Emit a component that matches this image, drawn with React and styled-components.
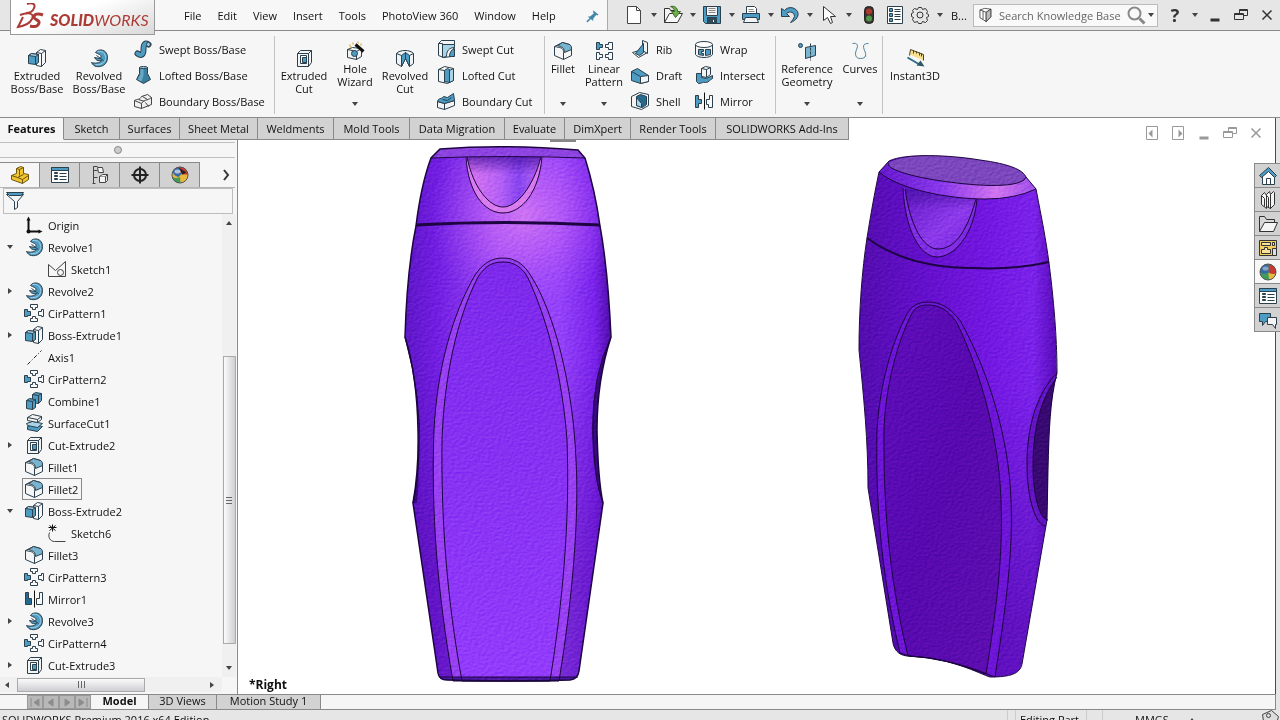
import React from "react";
import styled, { createGlobalStyle } from "styled-components";

const GlobalStyle = createGlobalStyle`
  * {
    box-sizing: border-box;
  }
  body {
    margin: 0;
    overflow: hidden;
    background: #e6e6e6;
  }
  body, button, input {
    font-family: "Open Sans", "Noto Sans", sans-serif;
    font-size: 11px;
    color: #111;
  }
  button {
    padding: 0;
    border: 0;
    background: none;
  }
  ul {
    list-style: none;
    margin: 0;
    padding: 0;
  }
  svg {
    display: block;
    flex: none;
  }
`;

const Window = styled.div`
  display: flex;
  flex-direction: column;
  height: 100vh;
  overflow: hidden;
`;

/* ---------- icons ---------- */

const INK = "#2b3f4c";
const BLUE = "#4d9cc3";
const PALE = "#a9d3e6";
const DEEP = "#256a8e";

const drawings = {
  extrude: (
    <g stroke={INK} strokeLinejoin="round">
      <path d="M8 3l4-3 5 1v12l-4 4-5-1z" fill="#f8f8f8" />
      <path d="M13 4l4-3M13 4v13M8 3l5 1" fill="none" />
      <path d="M0 6l3-2 7 1v8l-3 2-7-1z" fill={BLUE} />
      <path d="M0 6l7 1 3-2-7-1z" fill={PALE} />
      <path d="M7 7v8" />
    </g>
  ),
  revolve: (
    <g stroke={INK} strokeLinejoin="round">
      <path d="M5 3C7-1 17-1 17 8c0 7-6 10-11 9-2 0-4-2-5-4 3 1 8 1 10-2C7 12 5 10 4 8l5 1c2-1 2-3 0-4-1-1-3-1-4-2z" fill={BLUE} />
      <path d="M7 2c5-1 8 2 8 6M5 15c5 1 10-2 10-6" fill="none" stroke={PALE} />
      <path d="M6 6l7 5" />
    </g>
  ),
  sweep: (
    <g fill="none" strokeLinecap="round">
      <path d="M3 13c4 3 6 1 6-4 0-6 2-7 5-5" stroke={INK} strokeWidth="6" />
      <path d="M3 13c4 3 6 1 6-4 0-6 2-7 5-5" stroke={BLUE} strokeWidth="4" />
      <circle cx="14" cy="4" r="2" fill={PALE} stroke={INK} strokeWidth="1" />
    </g>
  ),
  loft: (
    <g stroke={INK} strokeLinejoin="round">
      <path d="M5 1v6L2 13l7 4 7-4-3-6V1z" fill="#3a7f9f" />
      <path d="M6 2v6l-3 5 4 2 2-6V3z" fill="#69a9c5" stroke="none" />
      <ellipse cx="9" cy="1" rx="4" ry="1" fill={PALE} />
    </g>
  ),
  boundary: (
    <g stroke="#444" strokeLinejoin="round" fill="#f1f1f1">
      <path d="M0 8c3-2 5 0 7-4l6-2 4 3v7l-10 4-7-2z" />
      <path d="M0 8l7 3c3-5 5-2 10-6M7 11v5M4 7l6 2M8 4l5 3M11 10l3 4" fill="none" />
    </g>
  ),
  extrudeCut: (
    <g stroke={INK} strokeLinejoin="round">
      <path d="M2 4l3-3h11v12l-3 4H2z" fill="#f4f4f4" />
      <path d="M2 4h11v13M13 4l3-3" fill="none" />
      <path d="M5 6h6v8H5z" fill="#fff" />
      <path d="M7 8h4v5H7z" fill={BLUE} />
    </g>
  ),
  hole: (
    <g stroke={INK} strokeLinejoin="round">
      <path d="M1 7l5-2 9 1v8l-5 3-9-2z" fill="#f4f4f4" />
      <path d="M1 7l9 2 5-3M10 9v8" fill="none" />
      <circle cx="8" cy="11" r="3" fill={BLUE} />
      <path d="M9 2l8 7" strokeWidth="3" stroke="#111" />
      <path d="M3 3h1M6 1h1M11 0h1M4 5h1M14 2h1" stroke="#d09a18" strokeWidth="2" />
    </g>
  ),
  revolveCut: (
    <g stroke={INK} strokeLinejoin="round">
      <path d="M0 4c3-4 14-4 17 0v10l-4 3-4-8-4 8-5-3z" fill="#eef3f5" />
      <path d="M5 6l4-3v6l-4 8zM13 6L9 3v6l4 8z" fill={BLUE} />
      <path d="M0 4l5 2M17 4l-4 2" fill="none" />
    </g>
  ),
  sweepCut: (
    <g stroke={INK} strokeLinejoin="round">
      <path d="M1 3l3-3h13v5l-3 11-8 1-5-2z" fill="#f4f4f4" />
      <path d="M5 4h12v3c-5 0-8 3-8 9l-4 1z" fill={PALE} />
      <path d="M17 8v8h-5c0-4 2-7 5-8z" fill={BLUE} />
      <path d="M1 3h4v13" fill="none" />
    </g>
  ),
  loftCut: (
    <g stroke={INK} strokeLinejoin="round">
      <path d="M1 3l6-3 9 2v12l-6 3-9-2z" fill="#f4f4f4" />
      <path d="M7 4l3-2 2 1v13l-5-1z" fill={BLUE} />
      <path d="M12 4l4-2v12l-4 2z" fill={PALE} />
      <path d="M1 3l6 1v12" fill="none" />
    </g>
  ),
  boundaryCut: (
    <g stroke={INK} strokeLinejoin="round">
      <path d="M0 9l7 2 10-3v5l-10 4-7-2z" fill="#f4f4f4" />
      <path d="M0 9c1-4 4-2 6-5l4 1 6-4 1 7-10 3z" fill={BLUE} />
      <path d="M7 11v6M5 7l5 1 4-3" fill="none" />
    </g>
  ),
  fillet: (
    <g stroke={INK} strokeLinejoin="round">
      <path d="M0 4l8-4 7 2 2 4v7l-8 4-9-4z" fill="#f6f6f6" />
      <path d="M8 0l7 2c2 1 2 3 2 5l-7 3c0-3-1-5-4-6l-3-1z" fill="#78b4cf" />
      <path d="M0 4l5 1c4 1 4 3 4 5v7" fill="none" />
    </g>
  ),
  linear: (
    <g stroke={INK} fill="#fafafa">
      <path d="M1 0h3v2h3v3H4v2H1z" fill={BLUE} />
      <path d="M17 0h-4v2h-3v3h3v2h4zM1 10h3v2h3v3H4v2H1zM17 10h-4v2h-3v3h3v2h4z" />
    </g>
  ),
  rib: (
    <g stroke={INK} strokeLinejoin="round">
      <path d="M1 12l10-3 5 3-9 5z" fill="#f4f4f4" />
      <path d="M11 0l5 2v11l-5-3z" fill="#f4f4f4" />
      <path d="M4 13L12 3v9l-4 3z" fill={BLUE} />
    </g>
  ),
  draft: (
    <g stroke={INK} strokeLinejoin="round">
      <path d="M0 5l6-3 11 7v6l-8 2-9-3z" fill={BLUE} />
      <path d="M0 5l9 5v7" fill="none" />
      <path d="M9 10l8-1v6l-8 2z" fill="#f4f4f4" />
    </g>
  ),
  shell: (
    <g stroke={INK} strokeLinejoin="round">
      <path d="M0 4l8-4 9 2v11l-7 4-10-3z" fill="#f4f4f4" />
      <path d="M5 4l4-2 6 2v8l-4 3-6-2z" fill={DEEP} />
      <path d="M5 5l5 6v4l-5-2z" fill={PALE} />
    </g>
  ),
  wrap: (
    <g stroke={INK} strokeLinejoin="round">
      <path d="M0 4v10c2 4 15 4 17 0V4z" fill="#f4f4f4" />
      <ellipse cx="8.5" cy="4" rx="8.5" ry="3" fill="#fff" />
      <path d="M3 9h5v2H6v2h2v2l-5-1zM10 9h5v5l-5 1z" fill={BLUE} />
    </g>
  ),
  intersect: (
    <g stroke={INK} strokeLinejoin="round">
      <path d="M1 7h5v4l5 1 6-3v3c-3 1-3 4-7 4-3-1-3 1-7 1l-2-2z" fill={BLUE} />
      <path d="M6 2l4-2 5 1v7l-4 3-5-1z" fill="#f4f4f4" />
      <path d="M6 2l5 1 4-2M11 3v8" fill="none" />
    </g>
  ),
  mirror: (
    <g stroke={INK} fill="#f8f8f8">
      <path d="M0 3h3v4h3v4H3v4H0z" fill={BLUE} />
      <path d="M17 3h-3v4h-3v5h2v3h4z" />
      <path d="M9 0v17" stroke="#111" />
    </g>
  ),
  mirrorTree: (
    <g stroke={INK} fill="#f8f8f8">
      <path d="M0 2h3v6h3v6H0z" fill={DEEP} />
      <path d="M17 2h-3v6h-3v6h6z" />
      <path d="M9 0v17" stroke="#111" />
    </g>
  ),
  reference: (
    <g stroke={INK} strokeLinejoin="round">
      <circle cx="2" cy="3" r="2" fill={BLUE} />
      <path d="M7 5l10-2v10L7 16z" fill="#7ab5d0" />
      <path d="M12 1v17" strokeDasharray="3 1" />
    </g>
  ),
  curves: (
    <path d="M1 1c5-1 6 2 4 6-2 5-1 9 4 9 6 0 6-4 4-8-2-5-1-7 4-7" fill="none" stroke="#47809a" />
  ),
  instant: (
    <g strokeLinejoin="round">
      <path d="M4 0l13 5v6L3 5z" fill="#f6e08f" />
      <path d="M3 6l1-6 13 5v6M7 1v3M10 2v2M13 3v3M15 4v3" fill="none" stroke="#4a4321" />
      <path d="M1 8l12 7" stroke="#2f6c83" strokeWidth="2" />
      <path d="M18 17l-8-1 4-5z" fill="#2f5666" />
    </g>
  ),
  cir: (
    <g stroke={INK} fill="#fafafa">
      <path d="M-1 5h3v2h3v4H2v1h-3z" fill={BLUE} />
      <path d="M18 5h-2v2h-3v4h3v1h2zM5 0h7v3h-2v2H7V3H5zM5 17h7v-3h-2v-2H7v2H5z" />
    </g>
  ),
  axis: <path d="M2 16L16 2" stroke="#222" strokeDasharray="4 2 1 2" />,
  origin: (
    <g fill="#111">
      <path d="M3 3v12h11" fill="none" stroke="#111" strokeWidth="2" />
      <path d="M1 4l2-4 2 4zM13 13l4 2-4 2z" />
      <circle cx="3" cy="15" r="2" />
    </g>
  ),
  sketch: (
    <g stroke="#444" fill="none">
      <path d="M0 16V4l7 6 10-9v15z" />
      <circle cx="12" cy="12" r="3" />
    </g>
  ),
  sketchOpen: (
    <g stroke="#444" fill="none">
      <path d="M1 8c-2 5 1 9 5 9h11" />
      <path d="M4 0v7M1 1l6 5M1 6l6-5M0 3h8" stroke="#111" />
    </g>
  ),
  combine: (
    <g stroke={INK} fill={BLUE} strokeLinejoin="round">
      <path d="M7 2l3-2 6 1v7l-3 3-6-1z" />
      <path d="M7 2l6 1 3-2M13 3v8" fill="none" />
      <path d="M1 8l3-2 6 1v8l-3 2-6-1z" />
      <path d="M1 8l6 1 3-2M7 9v8" fill="none" />
    </g>
  ),
  surface: (
    <g stroke={INK} strokeLinejoin="round">
      <path d="M2 12l6-2 9 2-5 5-10-2z" fill={BLUE} />
      <path d="M1 9l6-2 10 2-5 4-10-2z" fill={PALE} />
      <path d="M2 3l5-3 9 2v3l-4 3-10-2z" fill="#f4f4f4" />
      <path d="M2 3l10 2 4-3M12 5v3" fill="none" />
    </g>
  ),
  part: (
    <g stroke="#6d5410" strokeLinejoin="round">
      <path d="M5 2l4-2 3 1v6l5 1v5l-6 4-11-4V9l5-2z" fill="#f2c62f" />
      <path d="M0 9l6 2 6-3M5 2l3 1v6M8 3l4-2M11 17v-4l6-4M11 13l-5-2" fill="none" />
    </g>
  ),
  props: (
    <g stroke={INK}>
      <path d="M0 1h17v15H0z" fill="#fff" />
      <path d="M0 1h17v3H0z" fill={BLUE} />
      <path d="M3 6h3v1H3zM3 9h3v1H3zM3 12h3v1H3z" fill={BLUE} />
      <path d="M8 7h7M8 10h7M8 13h7" />
    </g>
  ),
  config: (
    <g stroke="#444" fill="#f4f4f4">
      <path d="M2 0v17M2 0h4M2 4h4M2 11h4M1 17h3" fill="none" />
      <path d="M6 1h5l1 5H7zM8 10h6v6H8z" />
      <path d="M8 10l3-2h5l-2 2M14 16l2-2V8" />
    </g>
  ),
  target: (
    <g stroke="#222" fill="none" strokeWidth="2">
      <circle cx="8.5" cy="8.5" r="6" />
      <path d="M8.5 0v17M0 8.5h17" />
    </g>
  ),
  ball: (
    <g>
      <circle cx="8.5" cy="8.5" r="8" fill="#3f9b58" />
      <path d="M9 9V.5a8 8 0 0 1 7.500 8.500c-1 2-5 2-7.500 0z" fill="#c83a31" />
      <path d="M9 9c3 2 6.500 2 7.500 0a8 8 0 0 1-6.500 7.500c-1-3-1-5-1-7.500z" fill="#e8b73c" />
      <path d="M9 9V.5a8 8 0 0 0-8.500 8c2 2 5.500 2.500 8.500.5z" fill="#356aa8" />
      <circle cx="8.5" cy="8.5" r="8" fill="none" stroke="#555" />
      <ellipse cx="6" cy="5" rx="3" ry="2" fill="#fff" opacity=".4" />
    </g>
  ),
  appearance: (
    <g>
      <circle cx="8.5" cy="8.5" r="8" fill="#e8b73c" />
      <path d="M1 5a8 8 0 0 1 6-4.500l3 7-3 3C4 10 2 8 1 5z" fill="#356aa8" />
      <path d="M7 .5c5-1 9 3 9.500 7.500L10 8z" fill="#c83a31" />
      <path d="M.5 10c3 2 5 2 8 .5l.5 6C5 17 1 14 .5 10z" fill="#3f9b58" />
      <path d="M7 1l8 5-4 2z" fill="#222" />
      <circle cx="8.5" cy="8.5" r="8" fill="none" stroke="#555" />
      <ellipse cx="6" cy="5" rx="3" ry="2" fill="#fff" opacity=".6" />
    </g>
  ),
  funnel: (
    <g stroke={INK} strokeLinejoin="round">
      <path d="M0 2h17l-6 7v6l-3 2V9z" fill="#f2f5f7" />
      <path d="M0 0h17l-2 3H3z" fill={BLUE} />
    </g>
  ),
  page: (
    <g stroke="#444" fill="#fdfdfd">
      <path d="M2 0h9l4 4v13H2z" />
      <path d="M11 0v4h4" fill="none" />
    </g>
  ),
  open: (
    <g stroke="#333" strokeLinejoin="round">
      <path d="M0 16V2h5l1 2h6v4" fill="#f4f4f4" />
      <path d="M0 16L5 7h13l-5 9z" fill="#f8f8f8" />
      <path d="M6 0c4-1 7 1 7 5h3l-5 6-4-6h3c0-3-2-4-4-5z" fill="#6fae4a" stroke="#3b6b29" />
    </g>
  ),
  save: (
    <g stroke={INK}>
      <path d="M0 0h17v17H2l-2-2z" fill={BLUE} />
      <path d="M3 0h11v9H3z" fill="#f4f4f4" />
      <path d="M5 2h7M5 4h7M5 6h7" stroke="#888" />
      <path d="M4 11h9v6H4z" fill="#2b4c5d" />
      <path d="M9 13h2v3H9z" fill="#fff" />
    </g>
  ),
  print: (
    <g stroke={INK}>
      <path d="M4 7V0h8l2 2v5z" fill="#fff" />
      <path d="M6 3h5M6 5h6" stroke="#888" />
      <path d="M0 7h17v6H0z" fill={BLUE} />
      <path d="M3 11h11l2 5H1z" fill="#f4f4f4" />
    </g>
  ),
  undo: <path d="M0 2v8h8L5 7c4-3 8-1 8 3-1 2-2 4-4 6 6-2 9-7 7-11C13 0 6 0 3 4z" fill={BLUE} stroke={INK} />,
  cursor: <path d="M3 0v14l4-3 3 6 2-1-2-6h5z" fill="#fff" stroke="#333" />,
  traffic: (
    <g>
      <rect x="4" y="0" width="9" height="17" rx="4" fill="#3a3230" stroke="#222" />
      <circle cx="8.5" cy="5" r="3" fill="#b03a2c" />
      <circle cx="8.5" cy="12" r="3" fill="#4c9a48" />
    </g>
  ),
  list: (
    <g stroke={INK} fill="#fff">
      <path d="M1 0h15v17H1z" />
      <path d="M3 2h3v3H3zM3 7h3v3H3zM3 12h3v3H3z" fill={BLUE} />
      <path d="M8 3h6M8 5h6M8 8h6M8 10h6M8 13h6" />
    </g>
  ),
  gear: (
    <g stroke="#333" fill="none">
      <circle cx="8.5" cy="8.5" r="3" />
      <path d="M7 1h3l1 2 3-1 2 3-1 2 2 1v2l-2 1 1 3-2 2-3-1-1 2H7l-1-2-3 1-2-3 1-2-2-1V7l2-1-1-2 2-2 3 1z" />
    </g>
  ),
  book: (
    <g stroke="#333" strokeLinejoin="round">
      <path d="M2 2l6-2 8 1v10l-6 6-3-2-5-3z" fill="#fff" />
      <path d="M6 3v11M10 5v12M2 2l8 3 6-4" fill="none" />
      <path d="M10 5l6-4v10l-6 6z" fill="#bbb" />
    </g>
  ),
  search: (
    <g fill="none" stroke="#888" strokeWidth="2">
      <circle cx="7" cy="7" r="6" />
      <path d="M12 12l5 5" strokeWidth="3" />
    </g>
  ),
  minimise: <path d="M4 12h9v3H4z" fill="currentColor" />,
  restore: (
    <g fill="none" stroke="currentColor">
      <path d="M2 7h9v6H2zM2 8h9M7 7V3h8v6h-4M7 4h8" />
    </g>
  ),
  close: <path d="M4 4l9 9M13 4l-9 9" stroke="currentColor" strokeWidth="1.500" />,
  paneLeft: (
    <g>
      <path d="M3 2h11v13H3z" fill="none" stroke="currentColor" />
      <path d="M9 5v8L5 9z" fill="currentColor" />
    </g>
  ),
  paneRight: (
    <g>
      <path d="M3 2h11v13H3z" fill="none" stroke="currentColor" />
      <path d="M9 5v8l4-4z" fill="currentColor" />
    </g>
  ),
  pin: (
    <g fill="#3f87a6">
      <path d="M10 1l7 6-2 1-1-1-4 5v3L3 9h3l5-4-1-1z" />
      <path d="M7 11l-5 5" stroke="#3f87a6" strokeWidth="2" />
    </g>
  ),
  home: (
    <g stroke={INK} strokeLinejoin="round">
      <path d="M3 8v9h12V8L9 3z" fill="#fff" />
      <path d="M7 17v-6h4v6" fill="none" />
      <path d="M0 8l9-8 8 8-2 2-6-6-7 6z" fill={BLUE} />
    </g>
  ),
  library: (
    <g stroke="#333" fill="#f4f4f4" strokeLinejoin="round">
      <path d="M11 3l3-3 1 1v12l-4 4zM7 3l3-3 1 3v14l-4-2zM2 4l3-3 2 3v13l-5-4z" />
      <path d="M2 4l3 3v8M7 4l2 2v10" fill="none" />
    </g>
  ),
  folder: (
    <g stroke="#333" strokeLinejoin="round">
      <path d="M0 16V1h5l2 3h8v3" fill="#d8d8d8" />
      <path d="M0 16L5 7h13l-4 9z" fill="#f4f4f4" />
    </g>
  ),
  palette: (
    <g stroke="#333" fill="#f3ce62">
      <path d="M0 1h17v15H0z" />
      <path d="M2 3h9v3H2zM13 3h2v3h-2zM2 14v-4h3V8h3v2h3v4z" fill="#f8e39a" />
      <path d="M13 9h4v7h-4z" fill="#ddd" />
    </g>
  ),
  forum: (
    <g stroke={INK} strokeLinejoin="round">
      <path d="M0 2h11v8H6l-3 4v-4H0z" fill={BLUE} />
      <path d="M8 6h9v7h-1v4l-3-4H8z" fill="#f4f4f4" />
    </g>
  ),
  note: (
    <g stroke="#444" fill="#ddd">
      <path d="M1 4l9-4 7 6-3 11H3z" />
      <circle cx="7" cy="5" r="2" />
    </g>
  ),
};

// strokes sit on whole coordinates, so the box is shifted by half a unit
const Icon = ({ name, size = 18 }) => (
  <svg width={size} height={size} viewBox="-0.5 -0.5 18 18" overflow="visible" aria-hidden="true">
    {drawings[name]}
  </svg>
);

const Caret = styled.span`
  width: 0;
  height: 0;
  border: 3px solid transparent;
  border-top: 4px solid #444;
  border-bottom: 0;
`;

/* ---------- title bar ---------- */

const TitleBar = styled.header`
  position: relative;
  display: flex;
  flex: 0 0 31px;
  padding-left: 155px;
  background: #e6e6e6;
  border-bottom: 1px solid #8a8a8a;
`;

const Brand = styled.div`
  position: absolute;
  z-index: 2;
  top: 0;
  left: 10px;
  display: flex;
  align-items: center;
  gap: 6px;
  width: 145px;
  height: 35px;
  padding-left: 5px;
  background: linear-gradient(160deg, #fff 40%, #d9d9d9);
  border: 1px solid #999;
  border-top: 0;
  color: #ad3b35;
`;

const BrandName = styled.div`
  padding-top: 6px;
  font-family: Lato, "Open Sans", sans-serif;
  font-size: 16px;
  line-height: 20px;
  font-style: italic;
  font-weight: 400;

  b {
    font-weight: 900;
  }
`;

const MenuBar = styled.nav`
  display: flex;
  flex: 0 0 453px;
  align-items: center;
  gap: 16px;
  padding: 2px 3px 0 29px;
  background: #f7f7f7;
  border-right: 1px solid #aaa;
`;

const MenuItem = styled.button`
  line-height: 20px;
  white-space: nowrap;
`;

const Toolbar = styled.div`
  display: flex;
  flex: 1;
  align-items: center;
  min-width: 0;
  padding-left: 14px;
`;

const ToolButton = styled.button`
  display: flex;
  flex: none;
  justify-content: center;
  align-items: center;
  width: ${(p) => p.$w || 24}px;
  height: 24px;
  color: ${(p) => p.$color || "#333"};
`;

const PinButton = styled(ToolButton)`
  margin-left: auto;
`;

const ToolCaret = styled(ToolButton)`
  width: 15px;
`;

const DocName = styled.span`
  flex: none;
  width: 26px;
  padding-left: 4px;
`;

const SearchBox = styled.label`
  display: flex;
  flex: 1;
  align-items: center;
  gap: 3px;
  min-width: 0;
  height: 23px;
  padding: 0 3px 0 4px;
  background: #f9f9f9;
  border: 1px solid #bbb;

  input {
    flex: 1;
    width: 0;
    min-width: 0;
    padding: 0 0 0 4px;
    border: 0;
    outline: 0;
    background: none;
  }
  input::placeholder {
    color: #666;
    opacity: 1;
  }
`;

const HelpMark = styled(ToolButton)`
  margin-left: 5px;
  font-size: 18px;
  font-weight: 700;
`;

/* ---------- ribbon ---------- */

const RibbonBar = styled.section`
  display: flex;
  flex: 0 0 87px;
  padding: 5px 0 3px 6px;
  background: #f6f6f6;
  border-bottom: 1px solid #8a8a8a;
`;

const Group = styled.div`
  display: flex;
  border-right: 1px solid #c4c4c4;

  &:last-child {
    border-right: 0;
  }
`;

const BigButton = styled.button`
  position: relative;
  display: flex;
  flex-direction: column;
  align-items: center;
  gap: 2px;
  width: ${(p) => p.$w}px;
  padding-top: ${(p) => (p.$menu ? 6 : 13)}px;
  line-height: 13px;
  white-space: pre-line;

  ${Caret} {
    position: absolute;
    bottom: 8px;
  }
`;

const SmallColumn = styled.div`
  width: ${(p) => p.$w}px;
  padding-left: 4px;
`;

const SmallButton = styled.button`
  display: flex;
  align-items: center;
  gap: 7px;
  height: 26px;
  white-space: nowrap;
`;

const ribbon = [
  [
    { w: 62, icon: "extrude", text: "Extruded\nBoss/Base" },
    { w: 62, icon: "revolve", text: "Revolved\nBoss/Base" },
    {
      w: 144,
      items: [
        ["sweep", "Swept Boss/Base"],
        ["loft", "Lofted Boss/Base"],
        ["boundary", "Boundary Boss/Base"],
      ],
    },
  ],
  [
    { w: 58, icon: "extrudeCut", text: "Extruded\nCut" },
    { w: 44, icon: "hole", text: "Hole\nWizard", menu: true },
    { w: 56, icon: "revolveCut", text: "Revolved\nCut" },
    {
      w: 111,
      items: [
        ["sweepCut", "Swept Cut"],
        ["loftCut", "Lofted Cut"],
        ["boundaryCut", "Boundary Cut"],
      ],
    },
  ],
  [
    { w: 36, icon: "fillet", text: "Fillet", menu: true },
    { w: 46, icon: "linear", text: "Linear\nPattern", menu: true },
    {
      w: 64,
      items: [
        ["rib", "Rib"],
        ["draft", "Draft"],
        ["shell", "Shell"],
      ],
    },
    {
      w: 84,
      items: [
        ["wrap", "Wrap"],
        ["intersect", "Intersect"],
        ["mirror", "Mirror"],
      ],
    },
  ],
  [
    { w: 62, icon: "reference", text: "Reference\nGeometry", menu: true },
    { w: 44, icon: "curves", text: "Curves", menu: true },
  ],
  [{ w: 64, icon: "instant", text: "Instant3D" }],
];

const Ribbon = () => (
  <RibbonBar>
    {ribbon.map((group, i) => (
      <Group key={i}>
        {group.map((part) =>
          part.items ? (
            <SmallColumn key={part.items[0][0]} $w={part.w}>
              {part.items.map(([icon, text]) => (
                <SmallButton key={text}>
                  <Icon name={icon} />
                  {text}
                </SmallButton>
              ))}
            </SmallColumn>
          ) : (
            <BigButton key={part.text} $w={part.w} $menu={part.menu}>
              <Icon name={part.icon} />
              {part.text}
              {part.menu && <Caret />}
            </BigButton>
          )
        )}
      </Group>
    ))}
  </RibbonBar>
);

/* ---------- command tabs ---------- */

const TabRow = styled.div`
  display: flex;
  flex: 0 0 22px;
  margin-right: 4px;
  background: #fff;
  border-right: 1px solid #2d5567;
`;

const Tab = styled.button`
  width: ${(p) => p.$w}px;
  background: ${(p) => (p.$active ? "#f6f6f6" : "#d2d2d2")};
  border-right: 1px solid #8a8a8a;
  border-bottom: 1px solid ${(p) => (p.$active ? "#f6f6f6" : "#8a8a8a")};
  font-weight: ${(p) => (p.$active ? 700 : 400)};
  line-height: 20px;
  white-space: nowrap;
`;

const DocControls = styled.div`
  display: flex;
  align-items: flex-end;
  margin: 0 6px 0 auto;

  ${ToolButton} {
    height: 14px;
  }
`;

const tabs = [
  ["Features", 64],
  ["Sketch", 56],
  ["Surfaces", 60],
  ["Sheet Metal", 78],
  ["Weldments", 76],
  ["Mold Tools", 76],
  ["Data Migration", 95],
  ["Evaluate", 60],
  ["DimXpert", 66],
  ["Render Tools", 85],
  ["SOLIDWORKS Add-Ins", 133],
];

/* ---------- feature tree ---------- */

const Body = styled.main`
  position: relative;
  display: flex;
  flex: 1;
  min-height: 0;
`;

const Panel = styled.aside`
  position: relative;
  display: flex;
  flex-direction: column;
  flex: 0 0 238px;
  background: #f6f6f6;
  border-right: 1px solid #8a8a8a;
`;

const Splitter = styled.div`
  display: flex;
  flex: 0 0 16px;
  align-items: center;
  justify-content: center;
  margin: 2px 2px 4px 0;
  border: 1px solid #c0c0c0;
  border-width: 1px 0;

  &::after {
    content: "";
    width: 6px;
    height: 6px;
    border: 1px solid #888;
    border-radius: 50%;
    background: #ccc;
  }
`;

const PanelTabs = styled.div`
  display: flex;
  flex: 0 0 26px;
  margin-right: 2px;
  border-bottom: 1px solid #b5b5b5;
`;

const PanelTab = styled.button`
  display: flex;
  align-items: center;
  justify-content: center;
  width: 40px;
  background: ${(p) => (p.$active ? "#f6f6f6" : "#d2d2d2")};
  border-top: 1px solid #8a8a8a;
  border-right: 1px solid #8a8a8a;
`;

const MoreButton = styled.button`
  display: flex;
  align-items: center;
  justify-content: center;
  width: 18px;
  margin-left: auto;
`;

const Filter = styled.label`
  display: flex;
  flex: 0 0 26px;
  align-items: center;
  margin: 0 4px 0 3px;
  padding-left: 2px;
  border: 1px solid #bdbdbd;

  input {
    flex: 1;
    min-width: 0;
    border: 0;
    outline: 0;
    background: none;
  }
`;

const TreeArea = styled.div`
  display: flex;
  flex: 1;
  min-height: 0;
`;

const Tree = styled.ul`
  flex: 1;
  overflow: hidden;
`;

const TreeRow = styled.li`
  display: flex;
  align-items: center;
  height: 22px;
  padding-left: ${(p) => (p.$deep ? 25 : 2)}px;
`;

const Expander = styled.button`
  display: flex;
  align-items: center;
  justify-content: center;
  width: 16px;
  height: 16px;
  margin-right: 4px;
  visibility: ${(p) => (p.$state ? "visible" : "hidden")};

  ${Caret} {
    transform: ${(p) => (p.$state === "closed" ? "rotate(-90deg)" : "none")};
  }
`;

const TreeLabel = styled.button`
  display: flex;
  align-items: center;
  gap: 5px;
  height: 22px;
  padding: 0 3px 0 2px;
  border: 1px solid ${(p) => (p.$boxed ? "#8a8a8a" : "transparent")};
`;

const ScrollY = styled.div`
  display: flex;
  flex-direction: column;
  align-items: center;
  width: 14px;
  margin-right: 1px;
  padding: 7px 0;
  background: #f0f0f0;

  ${Caret}:first-child {
    transform: rotate(180deg);
  }
`;

const ThumbY = styled.div`
  display: flex;
  align-items: center;
  justify-content: center;
  width: 13px;
  flex: 0 1 288px;
  margin: auto 0 22px;
  border: 1px solid #aaa;
  background: linear-gradient(90deg, #fafafa, #cfcfd3);

  &::after {
    content: "";
    width: 6px;
    height: 7px;
    background: repeating-linear-gradient(#666 0 1px, transparent 1px 3px);
  }
`;

const ScrollX = styled.div`
  display: flex;
  flex: 0 0 15px;
  align-items: center;
  margin: 0 15px 2px 0;
  padding: 0 7px 0 4px;
  background: #f0f0f0;

  ${Caret}:first-child {
    transform: rotate(90deg);
  }
  ${Caret}:last-child {
    margin-left: auto;
    transform: rotate(-90deg);
  }
`;

const ThumbX = styled.div`
  display: flex;
  align-items: center;
  justify-content: center;
  width: 128px;
  height: 14px;
  margin-left: 7px;
  border: 1px solid #aaa;
  background: linear-gradient(#fafafa, #cfcfd3);

  &::after {
    content: "";
    width: 7px;
    height: 7px;
    background: repeating-linear-gradient(90deg, #666 0 1px, transparent 1px 3px);
  }
`;

const features = [
  ["origin", "Origin"],
  ["revolve", "Revolve1", "open"],
  ["sketch", "Sketch1", null, true],
  ["revolve", "Revolve2", "closed"],
  ["cir", "CirPattern1"],
  ["extrude", "Boss-Extrude1", "closed"],
  ["axis", "Axis1"],
  ["cir", "CirPattern2"],
  ["combine", "Combine1"],
  ["surface", "SurfaceCut1"],
  ["extrudeCut", "Cut-Extrude2", "closed"],
  ["fillet", "Fillet1"],
  ["fillet", "Fillet2"],
  ["extrude", "Boss-Extrude2", "open"],
  ["sketchOpen", "Sketch6", null, true],
  ["fillet", "Fillet3"],
  ["cir", "CirPattern3"],
  ["mirrorTree", "Mirror1"],
  ["revolve", "Revolve3", "closed"],
  ["cir", "CirPattern4"],
  ["extrudeCut", "Cut-Extrude3", "closed"],
];

const FeaturePanel = () => (
  <Panel>
    <Splitter />
    <PanelTabs>
      {["part", "props", "config", "target", "appearance"].map((name, i) => (
        <PanelTab key={name} $active={i === 0} aria-label={name}>
          <Icon name={name} />
        </PanelTab>
      ))}
      <MoreButton aria-label="More tabs">
        <svg width="8" height="12" viewBox="0 0 8 12">
          <path d="M2 1l4 5-4 5" fill="none" stroke="#333" strokeWidth="2" />
        </svg>
      </MoreButton>
    </PanelTabs>
    <Filter>
      <Icon name="funnel" />
      <input type="text" aria-label="Filter" />
    </Filter>
    <TreeArea>
      <Tree>
        {features.map(([icon, text, state, deep]) => (
          <TreeRow key={text} $deep={deep}>
            <Expander $state={state} aria-label={`Toggle ${text}`}>
              <Caret />
            </Expander>
            <TreeLabel $boxed={text === "Fillet2"}>
              <Icon name={icon} />
              {text}
            </TreeLabel>
          </TreeRow>
        ))}
      </Tree>
      <ScrollY>
        <Caret />
        <ThumbY />
        <Caret />
      </ScrollY>
    </TreeArea>
    <ScrollX>
      <Caret />
      <ThumbX />
      <Caret />
    </ScrollX>
  </Panel>
);

/* ---------- viewport ---------- */

const Viewport = styled.section`
  position: relative;
  flex: 1;
  min-width: 0;
  margin-right: 4px;
  background: #fff;
  border-right: 1px solid #2d5567;
  overflow: hidden;
`;

const ViewName = styled.strong`
  position: absolute;
  left: 11px;
  bottom: 1px;
  font-size: 12px;
  line-height: 16px;
`;

const HeadsUpTab = styled.div`
  position: absolute;
  top: 0;
  left: 312px;
  width: 26px;
  height: 2px;
  background: #888;
`;

const TaskPane = styled.nav`
  position: absolute;
  z-index: 2;
  top: 23px;
  right: 0;
  width: 26px;
  border: 1px solid #8a8a8a;
  border-right: 0;
`;

const TaskButton = styled.button`
  display: flex;
  align-items: center;
  justify-content: center;
  width: 25px;
  height: 24px;
  background: ${(p) => (p.$active ? "#f8f8f8" : "#d2d2d2")};
  border-bottom: 1px solid #8a8a8a;

  &:last-child {
    height: 23px;
    border-bottom: 0;
  }
`;

const FRONT =
  "M440 149Q503 144 578 150L585 158Q595 190 600 226Q608 270 611 337Q597 380 597 430Q598 480 603 503L579 671Q578 679 570 680Q508 682 447 680Q439 680 438 673L413 503Q419 470 418 430Q417 375 405 337Q407 270 416 226Q421 185 431 158Z";
const FRONT_RIM =
  "M503 258C490 258 482 265 475 275C452 315 437 370 434 430C431 510 437 590 453 681L559 681C574 590 579 510 576 460C573 385 554 312 531 276C524 264 515 258 503 258Z";
const FRONT_PANEL =
  "M503 262C490 262 484 268 478 277C456 320 444 380 442 440C441 520 447 600 462 681L550 681C563 600 570 520 567 440C563 385 550 325 528 278C522 267 514 262 503 262Z";
const SIDE =
  "M879 172L889 161C905 153 950 155 980 160C1010 164 1023 170 1026 177L1036 189C1042 220 1046 240 1049 263C1055 310 1057 345 1057 373C1050 400 1049 430 1048 470L1047 520L1022 664C1020 674 1010 677 990 677C980 674 950 657 907 656C897 655 894 648 893 643L868 488C868 440 864 400 859 350C859 310 862 270 867 238Q873 200 879 172Z";
const SIDE_RIM =
  "M928 302C917 302 911 307 907 314C888 350 879 395 877 430C875 520 885 590 900 653L910 656Q950 658 995 677C1007 600 1013 550 1011 500C1009 440 990 375 961 322C951 308 941 302 928 302Z";
const SIDE_PANEL =
  "M928 305C918 305 914 309 911 315C894 350 885 395 884 430C883 520 892 590 908 656Q946 658 986 674C998 600 1003 550 1001 500C999 440 982 375 957 323C949 311 940 305 928 305Z";

const Bottles = () => (
  <svg width="100%" height="100%" viewBox="238 140 1037 554" preserveAspectRatio="xMinYMin meet" role="img" aria-label="Bottle model, two views">
    <defs>
      <linearGradient id="front" gradientUnits="userSpaceOnUse" x1="405" y1="0" x2="611" y2="0">
        <stop offset="0" stopColor="#5a14c4" />
        <stop offset=".15" stopColor="#6e1ae0" />
        <stop offset=".45" stopColor="#9844f6" />
        <stop offset=".75" stopColor="#923ef9" />
        <stop offset=".92" stopColor="#761fea" />
        <stop offset="1" stopColor="#4c0aa6" />
      </linearGradient>
      <linearGradient id="frontFoot" x1="0" y1="0" x2="0" y2="1">
        <stop offset=".4" stopColor="#4a06a0" stopOpacity="0" />
        <stop offset=".8" stopColor="#4a06a0" stopOpacity=".4" />
      </linearGradient>
      <radialGradient id="shine" gradientUnits="userSpaceOnUse" cx="524" cy="215" r="95">
        <stop offset="0" stopColor="#e484f2" stopOpacity=".7" />
        <stop offset=".5" stopColor="#c866f4" stopOpacity=".42" />
        <stop offset="1" stopColor="#a050f5" stopOpacity="0" />
      </radialGradient>
      <linearGradient id="frontPanel" x1="0" y1="0" x2="0" y2="1">
        <stop offset="0" stopColor="#7a25ea" />
        <stop offset=".5" stopColor="#842df2" />
        <stop offset="1" stopColor="#9038fb" />
      </linearGradient>
      <linearGradient id="lip" x1="0" y1="0" x2="1" y2="0">
        <stop offset="0" stopColor="#d873ee" />
        <stop offset=".45" stopColor="#b25cf5" />
        <stop offset=".7" stopColor="#8440ee" />
        <stop offset="1" stopColor="#b760f2" />
      </linearGradient>
      <linearGradient id="lipShade" x1="0" y1="0" x2="0" y2="1">
        <stop offset="0" stopColor="#4410a0" stopOpacity=".75" />
        <stop offset=".35" stopColor="#4410a0" stopOpacity="0" />
      </linearGradient>
      <linearGradient id="side" gradientUnits="userSpaceOnUse" x1="860" y1="0" x2="1057" y2="0">
        <stop offset="0" stopColor="#4f0bab" />
        <stop offset=".3" stopColor="#5f0dc8" />
        <stop offset=".65" stopColor="#6f14e0" />
        <stop offset=".88" stopColor="#771fe9" />
        <stop offset="1" stopColor="#5209b4" />
      </linearGradient>
      <linearGradient id="sideFoot" x1="0" y1="0" x2="0" y2="1">
        <stop offset=".45" stopColor="#4a06a0" stopOpacity="0" />
        <stop offset=".9" stopColor="#4a06a0" stopOpacity=".55" />
      </linearGradient>
      <linearGradient id="sideLip" x1="0" y1="0" x2="1" y2="1">
        <stop offset="0" stopColor="#5c14c0" />
        <stop offset=".6" stopColor="#8a36ea" />
        <stop offset="1" stopColor="#7020dc" />
      </linearGradient>
      <linearGradient id="sidePanel" x1="0" y1="0" x2="1" y2="1">
        <stop offset="0" stopColor="#5a0bb8" />
        <stop offset=".5" stopColor="#5308ac" />
        <stop offset="1" stopColor="#5a0cae" />
      </linearGradient>
      <linearGradient id="collar" x1="0" y1="0" x2="1" y2="0">
        <stop offset="0" stopColor="#6115cc" />
        <stop offset=".4" stopColor="#8634ea" />
        <stop offset=".75" stopColor="#d070f0" />
        <stop offset="1" stopColor="#9a48e8" />
      </linearGradient>
      <filter id="leather" x="0" y="0" width="100%" height="100%" colorInterpolationFilters="sRGB">
        <feTurbulence type="fractalNoise" baseFrequency=".3 .45" numOctaves="2" seed="4" result="noise" />
        <feDiffuseLighting in="noise" surfaceScale="1" lightingColor="#fff" result="lit">
          <feDistantLight azimuth="235" elevation="36" />
        </feDiffuseLighting>
        <feComposite in="lit" in2="SourceGraphic" operator="in" />
      </filter>
      <clipPath id="frontClip">
        <path d={FRONT} />
      </clipPath>
      <clipPath id="sideClip">
        <path d={SIDE} />
      </clipPath>
    </defs>

    <g clipPath="url(#frontClip)">
      <path d={FRONT} fill="url(#front)" />
      <path d={FRONT} fill="url(#frontFoot)" />
      <path d={FRONT} fill="url(#shine)" />
      <path d="M431 158L440 149Q503 144 578 150L585 158Q505 154 431 158Z" fill="#8a3fe0" />
      <path d="M405 337Q417 375 418 430Q419 470 413 503L417 503Q424 430 405 337Z" fill="#32077a" />
      <path d="M611 337Q592 380 592 430Q593 480 603 503L597 430Z" fill="#35077e" />
      <path d={FRONT_RIM} fill="#963cf2" />
      <path d={FRONT_PANEL} fill="url(#frontPanel)" />
      <path d="M438 677h140v5H438z" fill="#4a14a0" />
      <path d="M466 157C468 192 484 213 503 213S539 192 542 157Z" fill="#d878ee" />
      <path d="M467 157C473 187 489 207 503 207S533 187 541 157Z" fill="url(#lip)" />
      <path d="M467 157C473 187 489 207 503 207S533 187 541 157Z" fill="url(#lipShade)" />
    </g>

    <g clipPath="url(#sideClip)">
      <path d={SIDE} fill="url(#side)" />
      <path d={SIDE} fill="url(#sideFoot)" />
      <path d="M879 172C900 190 950 199 985 199Q1015 199 1036 189L1026 177L889 161Z" fill="url(#collar)" />
      <path d="M889 163C905 153 950 155 980 160C1010 164 1030 172 1024 180C1010 190 960 184 935 180C905 175 885 168 889 163Z" fill="#7843bb" />
      <path d={SIDE_RIM} fill="#6a12d6" />
      <path d={SIDE_PANEL} fill="url(#sidePanel)" />
      <path d="M1057 373C1035 395 1027 430 1027 463C1027 500 1036 526 1046 526Z" fill="#6011c4" />
      <path d="M1057 377C1040 400 1033 430 1033 465C1033 500 1041 520 1048 520Z" fill="#34086e" />
      <path d="M903 188C905 230 920 257 937 257S974 235 977 199Q940 198 903 188Z" fill="#7d28e4" />
      <path d="M905 188C910 225 923 249 938 249S966 235 976 199Q940 198 905 188Z" fill="url(#sideLip)" />
      <path d="M905 188C910 225 923 249 938 249S966 235 976 199Q940 198 905 188Z" fill="url(#lipShade)" />
    </g>

    <g filter="url(#leather)" opacity=".4" style={{ mixBlendMode: "soft-light" }}>
      <path d={FRONT} />
      <path d={SIDE} />
    </g>

    <g fill="none" stroke="#1c0540">
      <path d={FRONT} strokeWidth="1.5" />
      <path d={FRONT_RIM} />
      <path d={FRONT_PANEL} />
      <path d="M431 158Q505 155 585 158M439 677H578" />
      <path d="M416 225Q503 220 600 225" strokeWidth="3" />
      <path d="M466 157C468 192 484 213 503 213S539 192 542 157M467 157C473 187 489 207 503 207S533 187 541 157" />
      <path d="M405 337Q422 400 419 450Q418 480 413 503M611 337Q592 375 593 430Q594 480 603 503" />

      <path d={SIDE} />
      <path d={SIDE_RIM} />
      <path d={SIDE_PANEL} />
      <path d="M879 172C900 190 950 199 985 199Q1015 199 1036 189" />
      <path d="M889 163C885 168 905 175 935 180C960 184 1010 190 1024 180L1026 177" />
      <path d="M867 238C900 262 940 268 973 268Q1015 270 1049 262" strokeWidth="2" />
      <path d="M903 188C905 230 920 257 937 257S974 235 977 199M905 189C910 225 923 249 938 249S966 235 976 199" />
      <path d="M1057 373C1035 395 1027 430 1027 463C1027 500 1036 526 1046 526M1057 377C1040 400 1033 430 1033 465C1033 500 1041 520 1048 520" />
    </g>
  </svg>
);

/* ---------- bottom ---------- */

const BottomRow = styled.div`
  display: flex;
  flex: 0 0 16px;
  margin-right: 4px;
  padding-left: 27px;
  background: #f6f6f6;
  border: 1px solid #8a8a8a;
  border-width: 1px 1px 1px 0;
`;

const StepButton = styled.button`
  display: flex;
  align-items: center;
  justify-content: center;
  width: 16px;
  background: #b8b8b8;
  border: 1px solid #999;
`;

const steps = {
  First: "M1 0v9M9 1v7L4 4.500z",
  Previous: "M7 1v7L2 4.500z",
  Next: "M3 1v7l5-3.500z",
  Last: "M9 0v9M1 1v7l5-3.500z",
};

const ModelTab = styled.button`
  width: ${(p) => p.$w}px;
  padding-bottom: 2px;
  background: ${(p) => (p.$active ? "#f6f6f6" : "#d2d2d2")};
  border-right: 1px solid #8a8a8a;
  font-weight: ${(p) => (p.$active ? 700 : 400)};
  line-height: 12px;
`;

const StatusBar = styled.footer`
  display: flex;
  flex: 0 0 10px;
  padding: 0 1px 0 2px;
  overflow: hidden;
  line-height: 20px;
  background: #e6e6e6;
`;

const StatusCell = styled.span`
  display: flex;
  gap: 20px;
  width: ${(p) => p.$w}px;
  height: 20px;
  padding-left: ${(p) => p.$pad || 0}px;
  border-left: 1px solid #ccc;

  &:first-of-type {
    margin-left: auto;
  }
  ${Caret} {
    margin-top: 8px;
    transform: rotate(180deg);
  }
`;

const App = () => (
  <Window>
    <GlobalStyle />
    <TitleBar>
      <Brand>
        <svg width="28" height="29" viewBox="0 0 28 29" fill="none" stroke="#ad3b35" strokeWidth="2">
          <path d="M11 1c5-2 9 0 7 4-1 3-4 5-8 5" />
          <path d="M4 12c8-3 15-2 12 4-2 4-8 7-14 8l5-10" />
          <path d="M27 12c-5-2-9-1-9 2s6 3 5 6c-1 4-5 4-9 3" strokeWidth="3" />
        </svg>
        <BrandName>
          <b>SOLID</b>WORKS
        </BrandName>
      </Brand>
      <MenuBar>
        {["File", "Edit", "View", "Insert", "Tools", "PhotoView 360", "Window", "Help"].map((m) => (
          <MenuItem key={m}>{m}</MenuItem>
        ))}
        <PinButton aria-label="Pin menu">
          <Icon name="pin" size={14} />
        </PinButton>
      </MenuBar>
      <Toolbar>
        {["page", "open", "save", "print", "undo", "cursor"].map((name) => (
          <React.Fragment key={name}>
            <ToolButton aria-label={name}>
              <Icon name={name} />
            </ToolButton>
            <ToolCaret aria-label={`${name} options`}>
              <Caret />
            </ToolCaret>
          </React.Fragment>
        ))}
        <ToolButton $w={26} aria-label="Rebuild">
          <Icon name="traffic" />
        </ToolButton>
        <ToolButton $w={26} aria-label="File properties">
          <Icon name="list" />
        </ToolButton>
        <ToolButton aria-label="Options">
          <Icon name="gear" />
        </ToolButton>
        <ToolCaret aria-label="More options">
          <Caret />
        </ToolCaret>
        <DocName>B...</DocName>
        <SearchBox>
          <Icon name="book" size={14} />
          <input type="text" placeholder="Search Knowledge Base" aria-label="Search Knowledge Base" />
          <Icon name="search" />
          <Caret />
        </SearchBox>
        <HelpMark>?</HelpMark>
        <ToolCaret aria-label="Help options">
          <Caret />
        </ToolCaret>
        {["minimise", "restore", "close"].map((name) => (
          <ToolButton key={name} $w={26} aria-label={name}>
            <Icon name={name} />
          </ToolButton>
        ))}
      </Toolbar>
    </TitleBar>
    <Ribbon />
    <TabRow>
      {tabs.map(([text, w], i) => (
        <Tab key={text} $w={w} $active={i === 0}>
          {text}
        </Tab>
      ))}
      <DocControls>
        {["paneLeft", "paneRight", "minimise", "restore", "close"].map((name) => (
          <ToolButton key={name} $w={26} $color="#999" aria-label={`Document ${name}`}>
            <Icon name={name} />
          </ToolButton>
        ))}
      </DocControls>
    </TabRow>
    <Body>
      <FeaturePanel />
      <Viewport>
        <HeadsUpTab />
        <Bottles />
        <ViewName>*Right</ViewName>
      </Viewport>
      <TaskPane>
        {["home", "library", "folder", "palette", "ball", "props", "forum"].map((name) => (
          <TaskButton key={name} $active={name === "ball"} aria-label={`${name} pane`}>
            <Icon name={name} />
          </TaskButton>
        ))}
      </TaskPane>
    </Body>
    <BottomRow>
      {Object.entries(steps).map(([name, d]) => (
        <StepButton key={name} aria-label={name}>
          <svg width="10" height="9" viewBox="0 0 10 9">
            <path d={d} fill="#8c8c8c" stroke="#8c8c8c" />
          </svg>
        </StepButton>
      ))}
      <ModelTab $w={58} $active>
        Model
      </ModelTab>
      <ModelTab $w={68}>3D Views</ModelTab>
      <ModelTab $w={104}>Motion Study 1</ModelTab>
    </BottomRow>
    <StatusBar>
      <div>SOLIDWORKS Premium 2016 x64 Edition</div>
      <StatusCell $w={8} />
      <StatusCell $w={71} $pad={4}>
        Editing Part
      </StatusCell>
      <StatusCell $w={16} />
      <StatusCell $w={159} $pad={32}>
        MMGS
        <Caret />
      </StatusCell>
      <Icon name="note" />
    </StatusBar>
  </Window>
);

export default App;
